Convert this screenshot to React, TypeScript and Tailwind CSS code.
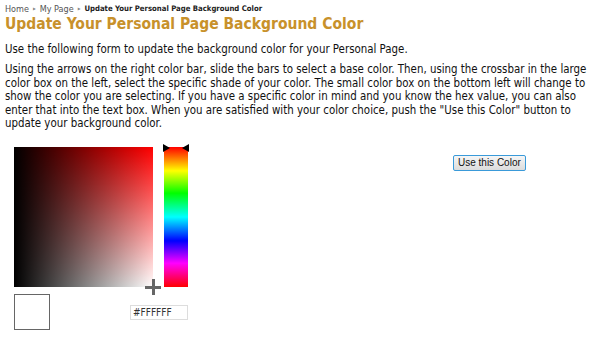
import React from "react";

const font = {
  fontFamily:
    '"DejaVu Sans Condensed", "DejaVu Sans", Verdana, sans-serif',
};

function Crumb() {
  return (
    <div className="flex items-center gap-[4px] text-[9px] leading-[12px] text-[#555]">
      <span>Home</span>
      <span className="text-[4px] text-[#888]">▶</span>
      <span>My Page</span>
      <span className="text-[4px] text-[#888]">▶</span>
      <span className="text-[7.7px] font-bold text-[#222]">
        Update Your Personal Page Background Color
      </span>
    </div>
  );
}

function Picker() {
  return (
    <div className="flex gap-[11px]">
      <div className="flex flex-col">
        <div className="relative h-[140px] w-[139px]">
          <div className="absolute inset-0 bg-[#ff0000]" />
          <div className="absolute inset-0 bg-gradient-to-b from-transparent to-white" />
          <div className="absolute inset-0 bg-gradient-to-r from-black to-transparent" />
          <div className="absolute -bottom-[8px] -right-[8px] h-[16px] w-[16px]">
            <div className="absolute left-[7px] top-0 h-[16px] w-[3px] bg-[#666]" />
            <div className="absolute left-0 top-[7px] h-[3px] w-[16px] bg-[#666]" />
          </div>
        </div>

        <div className="mt-[7px] flex items-start">
          <div className="h-[36px] w-[36px] border border-[#666] bg-white" />
        </div>
      </div>

      <div className="flex flex-col">
        <div className="relative h-[140px] w-[24px] bg-[linear-gradient(to_bottom,#ff0000_0%,#ffff00_17%,#00ff00_33%,#00ffff_50%,#0000ff_67%,#ff00ff_83%,#ff0000_100%)]">
          <div className="absolute -left-[1px] -top-[3px] h-0 w-0 border-y-[4px] border-l-[7px] border-y-transparent border-l-black" />
          <div className="absolute -right-[1px] -top-[3px] h-0 w-0 border-y-[4px] border-r-[7px] border-y-transparent border-r-black" />
        </div>
      </div>
    </div>
  );
}

export default function App() {
  return (
    <div
      className="h-[345px] w-[600px] overflow-hidden bg-white px-[5px] pt-[3px] text-[#111]"
      style={font}
    >
      <Crumb />

      <h1 className="text-[15.5px] font-bold leading-[19px] text-[#c8912b]">
        Update Your Personal Page Background Color
      </h1>

      <p className="mt-[9px] text-[11.4px] leading-[13.4px]">
        Use the following form to update the background color for your Personal Page.
      </p>

      <p className="mt-[7px] text-[11.4px] leading-[13.4px]">
        Using the arrows on the right color bar, slide the bars to select a base color. Then, using the
        crossbar in the large color box on the left, select the specific shade of your color. The small
        color box on the bottom left will change to show the color you are selecting. If you have a
        specific color in mind and you know the hex value, you can also enter that into the text box.
        When you are satisfied with your color choice, push the "Use this Color" button to update your
        background color.
      </p>

      <div className="mt-[17px] flex pl-[9px]">
        <div className="relative">
          <Picker />
          <input
            readOnly
            value="#FFFFFF"
            className="absolute left-[116px] top-[158px] h-[15px] w-[58px] border border-[#ddd] px-[2px] text-[10px] text-[#333] outline-none"
          />
        </div>

        <div className="ml-[265px] mt-[2px]">
          <button className="h-[16px] rounded-[2px] border border-[#3a9ad9] bg-gradient-to-b from-[#f6f6f6] to-[#dcdcdc] px-[4px] text-[10px] leading-[13px] text-[#111]"
            style={{ fontFamily: '"Liberation Sans", Arial, sans-serif' }}
          >
            Use this Color
          </button>
        </div>
      </div>
    </div>
  );
}
